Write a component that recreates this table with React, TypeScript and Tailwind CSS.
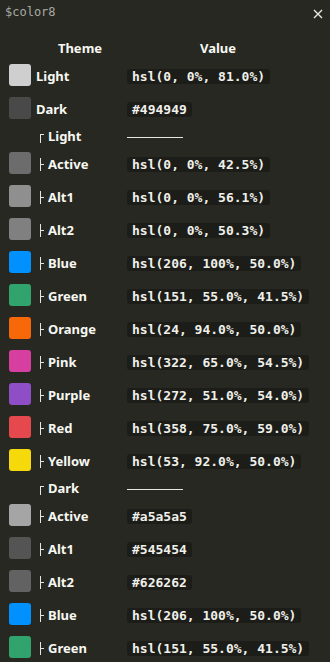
import type { ReactNode } from "react";

type Row =
  | { kind: "group"; name: string }
  | { kind: "item"; name: string; color: string; value: string; sub?: boolean };

const rows: Row[] = [
  { kind: "item", name: "Light", color: "#cfcfcf", value: "hsl(0, 0%, 81.0%)" },
  { kind: "item", name: "Dark", color: "#494949", value: "#494949" },
  { kind: "group", name: "Light" },
  { kind: "item", sub: true, name: "Active", color: "#6c6c6c", value: "hsl(0, 0%, 42.5%)" },
  { kind: "item", sub: true, name: "Alt1", color: "#8f8f8f", value: "hsl(0, 0%, 56.1%)" },
  { kind: "item", sub: true, name: "Alt2", color: "#808080", value: "hsl(0, 0%, 50.3%)" },
  { kind: "item", sub: true, name: "Blue", color: "#0091ff", value: "hsl(206, 100%, 50.0%)" },
  { kind: "item", sub: true, name: "Green", color: "#30a46c", value: "hsl(151, 55.0%, 41.5%)" },
  { kind: "item", sub: true, name: "Orange", color: "#f76808", value: "hsl(24, 94.0%, 50.0%)" },
  { kind: "item", sub: true, name: "Pink", color: "#d63f9f", value: "hsl(322, 65.0%, 54.5%)" },
  { kind: "item", sub: true, name: "Purple", color: "#8e4ec6", value: "hsl(272, 51.0%, 54.0%)" },
  { kind: "item", sub: true, name: "Red", color: "#e5484d", value: "hsl(358, 75.0%, 59.0%)" },
  { kind: "item", sub: true, name: "Yellow", color: "#f5d90a", value: "hsl(53, 92.0%, 50.0%)" },
  { kind: "group", name: "Dark" },
  { kind: "item", sub: true, name: "Active", color: "#a5a5a5", value: "#a5a5a5" },
  { kind: "item", sub: true, name: "Alt1", color: "#545454", value: "#545454" },
  { kind: "item", sub: true, name: "Alt2", color: "#626262", value: "#626262" },
  { kind: "item", sub: true, name: "Blue", color: "#0091ff", value: "hsl(206, 100%, 50.0%)" },
  { kind: "item", sub: true, name: "Green", color: "#30a46c", value: "hsl(151, 55.0%, 41.5%)" },
];

const sans = "font-['Noto_Sans',sans-serif]";
const mono = "font-['DejaVu_Sans_Mono',monospace]";

// ├ dibujado con dos trazos
function Tee() {
  return (
    <span className="flex h-[13px] w-[8px] shrink-0 items-center">
      <span className="h-full w-px bg-[#e6e6e0]" />
      <span className="h-px w-[3px] bg-[#e6e6e0]" />
    </span>
  );
}

// ┌ para las cabeceras de grupo
function Corner() {
  return (
    <span className="mt-[3px] flex h-[13px] w-[8px] shrink-0 items-start pt-[2px]">
      <span className="h-[9px] w-[4px] border-l border-t border-[#e6e6e0]" />
    </span>
  );
}

function Code({ children }: { children: ReactNode }) {
  return (
    <code className={`${mono} inline-block rounded-[3px] bg-[#1c1d19] px-[5px] text-[13px] leading-[15px] text-[#f0f0ea]`}>
      {children}
    </code>
  );
}

export default function App() {
  return (
    <div className={`${sans} h-[662px] w-[330px] overflow-hidden bg-[#272822] text-[#f8f8f2]`}>
      {/* Titulo */}
      <div className="flex h-[38px] items-start justify-between pl-[5px] pr-[7px] pt-[4px]">
        <span className={`${mono} text-[12px] leading-[16px] text-[#a8a8a2]`}>$color8</span>
        <svg className="mt-[5px]" width="10" height="10" viewBox="0 0 10 10">
          <path d="M1 1 L9 9 M9 1 L1 9" stroke="#e8e8e2" strokeWidth="1.4" />
        </svg>
      </div>

      {/* Cabecera */}
      <div className="flex h-[22px] items-center text-[13px] font-bold">
        <div className="w-[127px] pl-[33px] text-center">Theme</div>
        <div className="w-[182px] text-center">Value</div>
      </div>

      {rows.map((row, i) =>
        row.kind === "group" ? (
          <div key={i} className="flex h-[22px] items-center text-[13px] font-bold">
            <div className="flex w-[127px] items-center pl-[40px]">
              <Corner />
              <span>{row.name}</span>
            </div>
            <div className="h-px w-[56px] bg-[#e6e6e0]" />
          </div>
        ) : (
          <div key={i} className="flex h-[33px] items-center text-[13px] font-bold">
            <div className="flex w-[127px] items-center pl-[9px]">
              <span
                className="mb-[3px] mr-[5px] h-[22px] w-[22px] shrink-0 rounded-[3px]"
                style={{ backgroundColor: row.color }}
              />
              {row.sub && (
                <span className="ml-[4px] flex">
                  <Tee />
                </span>
              )}
              <span>{row.name}</span>
            </div>
            <Code>{row.value}</Code>
          </div>
        )
      )}
    </div>
  );
}
